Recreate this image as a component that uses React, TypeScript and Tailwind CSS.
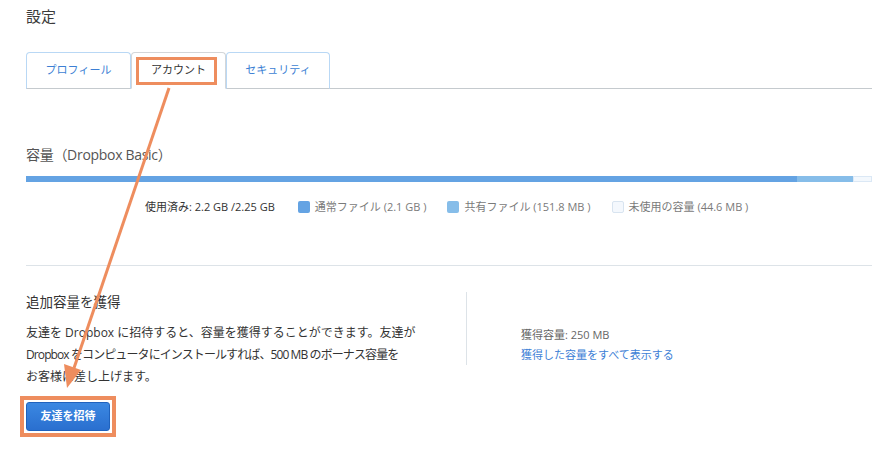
import React from "react";

const TABS = [
  { label: "プロフィール", width: "w-[105px]", active: false },
  { label: "アカウント", width: "w-[95px]", active: true },
  { label: "セキュリティ", width: "w-[104px]", active: false },
];

function Legend({ swatch, label }: { swatch: string; label: string }) {
  return (
    <div className="flex items-center gap-[5px]">
      <span className={`w-[12px] h-[12px] rounded-[2px] ${swatch}`} />
      <span className="text-[#7a7a7a]">{label}</span>
    </div>
  );
}

export default function App() {
  return (
    <div className="relative w-[886px] h-[470px] bg-white overflow-hidden font-['Open_Sans','Noto_Sans_CJK_JP',sans-serif] text-[#333]">
      <div className="pl-[26px] pr-[14px]">
        <h1 className="pt-[6px] text-[15px] leading-[20px] text-[#3b3b3b]">設定</h1>

        {/* タブ */}
        <div className="mt-[26px] flex border-b border-[#c5cace]">
          {TABS.map((t) => (
            <div
              key={t.label}
              className={`${t.width} h-[37px] -mb-px flex items-center justify-center rounded-t-[4px] border text-[11px] ${
                t.active
                  ? "border-[#d3d6d9] bg-white text-[#333] border-b-white"
                  : "border-[#b9d8f5] text-[#3d7fd4] border-b-[#c5cace]"
              }`}
            >
              {t.label}
            </div>
          ))}
        </div>

        {/* 容量 */}
        <h2 className="mt-[56px] text-[14px] tracking-[-0.3px] leading-[20px] text-[#555]">容量（Dropbox Basic）</h2>
        <div className="mt-[11px] h-[6px] flex">
          <div className="w-[771px] bg-[#64a3e3]" />
          <div className="w-[56px] bg-[#86bde9]" />
          <div className="flex-1 bg-[#f3f8fd] border border-[#dbe8f5]" />
        </div>
        <div className="mt-[17px] ml-[119px] flex items-center gap-[21px] text-[11px] leading-[16px]">
          <span className="mr-[2px] text-[#333]">使用済み: 2.2 GB /2.25 GB</span>
          <Legend swatch="bg-[#64a3e3]" label="通常ファイル (2.1 GB )" />
          <Legend swatch="bg-[#86bde9]" label="共有ファイル (151.8 MB )" />
          <Legend swatch="bg-[#f4f8fd] border border-[#d8e4f0]" label="未使用の容量 (44.6 MB )" />
        </div>

        <div className="mt-[50px] border-t border-[#dde3e8]" />

        {/* 追加容量 */}
        <div className="flex">
          <div className="w-[440px]">
            <h2 className="mt-[26px] text-[13.5px] leading-[20px] text-[#333]">追加容量を獲得</h2>
            <p className="mt-[10px] text-[12px] leading-[22px] text-[#333] whitespace-nowrap">
              友達を Dropbox に招待すると、容量を獲得することができます。友達が
              <br />
              <span className="tracking-[-0.9px]">Dropbox をコンピュータにインストールすれば、500 MB のボーナス容量を</span>
              <br />
              お客様に差し上げます。
            </p>
            <button className="mt-[14px] w-[84px] h-[29px] rounded-[3px] border border-[#1f62bd] bg-gradient-to-b from-[#3b88e2] to-[#2a6fcf] text-white text-[11px] font-bold">
              友達を招待
            </button>
          </div>
          <div className="mt-[26px] h-[73px] border-l border-[#dde3e8] pl-[54px] pt-[34px] text-[11px]">
            <div className="leading-[18px] text-[#666]">獲得容量: 250 MB</div>
            <a className="block leading-[22px] text-[#3d80d6]">獲得した容量をすべて表示する</a>
          </div>
        </div>
      </div>

      {/* 注釈 */}
      <div className="absolute left-[136px] top-[57px] w-[81px] h-[28px] border-[3px] border-[#ee8d5e]" />
      <div className="absolute left-[20px] top-[396px] w-[96px] h-[41px] border-[4px] border-[#ee8d5e]" />
      <svg className="absolute left-0 top-0 pointer-events-none" width="886" height="470">
        <line x1="169" y1="88" x2="74" y2="368" stroke="#ee8d5e" strokeWidth="3" />
        <polygon points="67,388 64,364 81,370" fill="#ee8d5e" />
      </svg>
    </div>
  );
}
